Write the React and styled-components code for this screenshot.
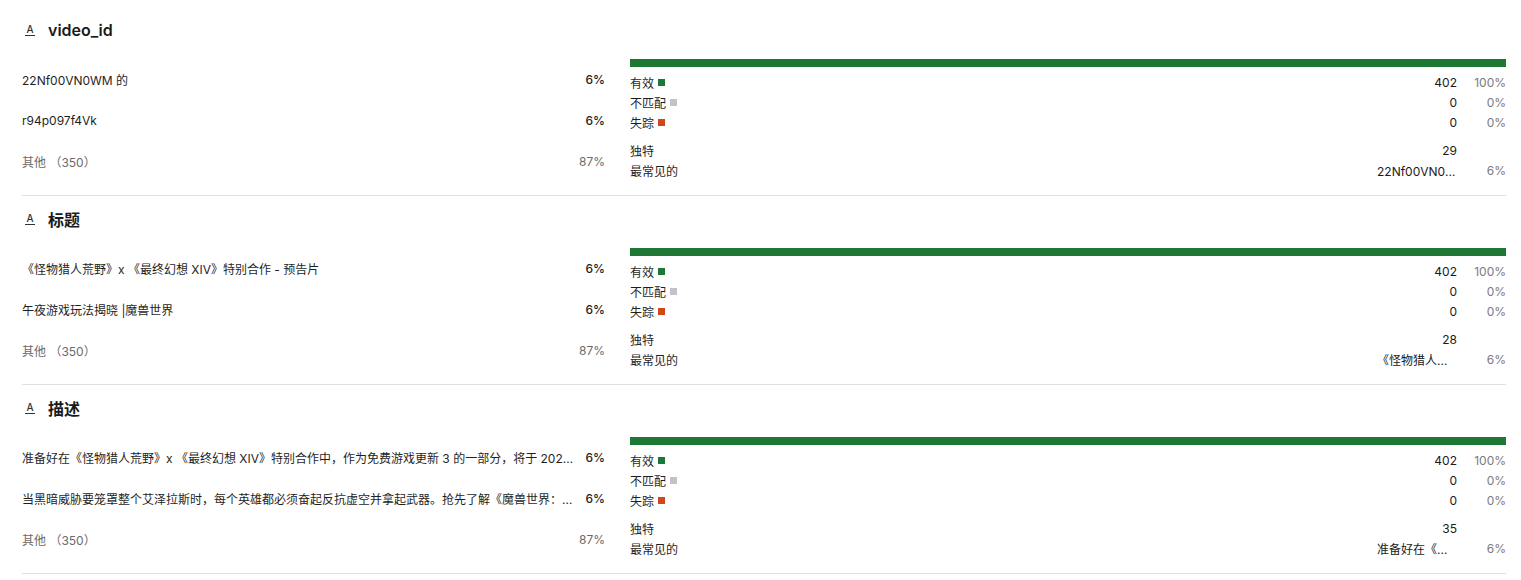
import React from 'react';
import styled, { createGlobalStyle } from 'styled-components';

const GlobalStyle = createGlobalStyle`
  body {
    margin: 0;
    background: #fff;
    font-family: Inter, "Noto Sans CJK SC", sans-serif;
    color: #1f1f1f;
  }
`;

const Page = styled.div`
  padding: 7px 15px 0 22px;
`;

const Section = styled.section`
  border-bottom: 1px solid #e0e0e0;
  padding-bottom: 13px;
`;

const Header = styled.div`
  display: flex;
  align-items: center;
  height: 24px;
  margin-top: 11px;
  margin-bottom: 17px;
  gap: 13px;
  padding-left: 3px;
`;

const TypeIcon = styled.span`
  display: inline-flex;
  flex-direction: column;
  align-items: center;
  width: 10px;
  font-size: 10px;
  line-height: 10px;
  font-weight: 500;
  color: #333;
  &::after {
    content: '';
    display: block;
    width: 10px;
    height: 1px;
    margin-top: 1px;
    background: #333;
  }
`;

const Title = styled.h2`
  margin: 0;
  font-size: 16px;
  font-weight: 600;
  color: #1a1a1a;
`;

const Body = styled.div`
  display: grid;
  grid-template-columns: 583px 1fr;
  column-gap: 25px;
`;

const TopList = styled.div`
  display: flex;
  flex-direction: column;
`;

const TopRow = styled.div`
  display: flex;
  align-items: center;
  justify-content: space-between;
  gap: 12px;
  height: 41px;
  font-size: 12px;
  color: ${(p) => (p.$muted ? '#6b6b6b' : '#1f1f1f')};
`;

const TopLabel = styled.span`
  flex: 1;
  min-width: 0;
  white-space: nowrap;
  overflow: hidden;
  text-overflow: ellipsis;
`;

const TopPct = styled.span`
  font-weight: ${(p) => (p.$muted ? 400 : 500)};
  color: ${(p) => (p.$muted ? '#6b6b6b' : '#222')};
`;

const Stats = styled.div`
  display: flex;
  flex-direction: column;
`;

const Bar = styled.div`
  height: 8px;
  background: #1e7834;
  margin-bottom: 5px;
`;

const StatGroup = styled.div`
  display: flex;
  flex-direction: column;
  & + & {
    margin-top: 8px;
  }
`;

const StatRow = styled.div`
  display: grid;
  grid-template-columns: 1fr auto 49px;
  align-items: center;
  height: 20px;
  font-size: 12px;
`;

const StatLabel = styled.span`
  display: flex;
  align-items: center;
  gap: 4px;
`;

const Swatch = styled.span`
  width: 7px;
  height: 7px;
  background: ${(p) => p.$color};
`;

const StatValue = styled.span`
  text-align: ${(p) => (p.$clip ? 'left' : 'right')};
  width: ${(p) => (p.$clip ? '80px' : 'auto')};
  white-space: nowrap;
  overflow: hidden;
  text-overflow: ellipsis;
  color: #1a1a1a;
`;

const StatPct = styled.span`
  text-align: right;
  color: #7a7a80;
`;

const sections = [
  {
    title: 'video_id',
    top: ['22Nf00VN0WM 的', 'r94p097f4Vk'],
    unique: 29,
    common: '22Nf00VN0WM 的',
  },
  {
    title: '标题',
    top: ['《怪物猎人荒野》x 《最终幻想 XIV》特别合作 - 预告片', '午夜游戏玩法揭晓 |魔兽世界'],
    unique: 28,
    common: '《怪物猎人荒野》x 《最终幻想 XIV》特别合作 - 预告片',
  },
  {
    title: '描述',
    top: [
      '准备好在《怪物猎人荒野》x 《最终幻想 XIV》特别合作中，作为免费游戏更新 3 的一部分，将于 2025 年发布',
      '当黑暗威胁要笼罩整个艾泽拉斯时，每个英雄都必须奋起反抗虚空并拿起武器。抢先了解《魔兽世界：午夜》',
    ],
    unique: 35,
    common: '准备好在《怪物猎人荒野》',
  },
];

const ColumnSection = ({ title, top, unique, common }) => (
  <Section>
    <Header>
      <TypeIcon>A</TypeIcon>
      <Title>{title}</Title>
    </Header>
    <Body>
      <TopList>
        {top.map((t) => (
          <TopRow key={t}>
            <TopLabel>{t}</TopLabel>
            <TopPct>6%</TopPct>
          </TopRow>
        ))}
        <TopRow $muted>
          <TopLabel>其他 （350）</TopLabel>
          <TopPct $muted>87%</TopPct>
        </TopRow>
      </TopList>
      <Stats>
        <Bar />
        <StatGroup>
          <StatRow>
            <StatLabel>有效 <Swatch $color="#1e7834" /></StatLabel>
            <StatValue>402</StatValue>
            <StatPct>100%</StatPct>
          </StatRow>
          <StatRow>
            <StatLabel>不匹配 <Swatch $color="#c0c3c8" /></StatLabel>
            <StatValue>0</StatValue>
            <StatPct>0%</StatPct>
          </StatRow>
          <StatRow>
            <StatLabel>失踪 <Swatch $color="#d0471a" /></StatLabel>
            <StatValue>0</StatValue>
            <StatPct>0%</StatPct>
          </StatRow>
        </StatGroup>
        <StatGroup>
          <StatRow>
            <StatLabel>独特</StatLabel>
            <StatValue>{unique}</StatValue>
            <StatPct />
          </StatRow>
          <StatRow>
            <StatLabel>最常见的</StatLabel>
            <StatValue $clip>{common}</StatValue>
            <StatPct>6%</StatPct>
          </StatRow>
        </StatGroup>
      </Stats>
    </Body>
  </Section>
);

export default function App() {
  return (
    <>
      <GlobalStyle />
      <Page>
        {sections.map((s) => (
          <ColumnSection key={s.title} {...s} />
        ))}
      </Page>
    </>
  );
}
